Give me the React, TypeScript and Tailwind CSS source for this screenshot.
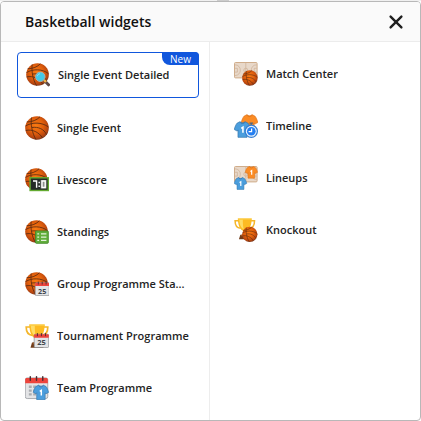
import React, { useId } from "react";

type BoxProps = { x?: number; y?: number; s?: number };

function Ball({ x = 0, y = 0, s = 1 }: BoxProps) {
  const id = useId();
  return (
    <g transform={`translate(${x} ${y}) scale(${s})`}>
      <radialGradient id={id} cx="0.45" cy="0.4" r="0.62">
        <stop offset="0" stopColor="#f97b12" />
        <stop offset="0.5" stopColor="#e2600c" />
        <stop offset="0.82" stopColor="#b9460e" />
        <stop offset="1" stopColor="#7a3a22" />
      </radialGradient>
      <circle cx="12" cy="12" r="11.8" fill={`url(#${id})`} />
      <g fill="none" stroke="#5e2c12" strokeWidth="0.9">
        <path d="M.5 10C7 6 17 6 23.4 11" />
        <path d="M6.5 1.5C5.5 8 7 17 11 23.7" />
        <path d="M1.8 6C7 6 12 4 15 .8" />
        <path d="M7 11.5C13 10.5 19 13 21.5 18.5" />
        <path d="M.8 14.5C7 13 14 16 17.5 22" />
      </g>
    </g>
  );
}

function Trophy() {
  return (
    <g>
      <path d="M5 3H1.2c0 5 2.2 8 6 8.3M19 3h3.8c0 5-2.2 8-6 8.3" fill="none" stroke="#f4b62c" strokeWidth="1.7" />
      <path d="M4.3.6h15.4C19.6 8 17.5 13 13.6 14.5V19h-3.2v-4.5C6.5 13 4.4 8 4.3.6Z" fill="#fdbb22" />
      <path d="M5.8 1.6h4c0 5 .2 8 1.2 11.5C7.5 11 6 7 5.8 1.6Z" fill="#ffdc65" />
      <path d="M4.3.6h15.4v1.2H4.3Z" fill="#fbd04a" />
      <path d="M7 18.5h10l1.5 5.2h-13Z" fill="#713c19" />
      <path d="M8 18.5h8l.6 1.8H7.5Z" fill="#a45a25" />
    </g>
  );
}

function Calendar({ x = 0, y = 0, s = 1, day }: BoxProps & { day?: string }) {
  return (
    <g transform={`translate(${x} ${y}) scale(${s})`}>
      <rect x=".3" y="2" width="23.4" height="21.5" rx="2" fill="#e3e4e6" stroke={day ? "#777b80" : "#a5a8ac"} strokeWidth="1" />
      <path d="M.2 7.5V3.7c0-1 .8-1.7 1.8-1.7h20c1 0 1.8.7 1.8 1.7v3.8Z" fill="#ed443c" />
      <g stroke="#4c2c30" strokeWidth="1.5" strokeLinecap="round">
        <path d="M5.5.8v3.6M12 .8v3.6M18.5.8v3.6" />
      </g>
      {day ? (
        <text x="12" y="20" textAnchor="middle" fill="#3f464d" className="font-['Open_Sans',sans-serif] text-[12px] font-bold">
          {day}
        </text>
      ) : (
        <path d="M4 10h3v2.4H4Zm4.5 0h3v2.4h-3Zm4.5 0h3v2.4h-3ZM4 14h3v2.4H4Zm4.5 0h3v2.4h-3ZM4 18h3v2.4H4Zm4.5 0h3v2.4h-3Z" fill="#a9acb0" />
      )}
    </g>
  );
}

function Court() {
  return (
    <g fill="none" stroke="#cfb095" strokeWidth=".7">
      <rect x=".5" y=".5" width="22.6" height="15.4" rx="1" fill="#e8d8c9" stroke="#d0ad8b" strokeWidth="1" />
      <path d="M11.8.5v15.4M.8 6.3h2.6v3.8H.8M22.8 6.3h-2.6v3.8h2.6" />
      <path d="M.8 2.8c7.4 0 7.4 10.8 0 10.8M22.8 2.8c-7.4 0-7.4 10.8 0 10.8" />
      <circle cx="11.8" cy="8.2" r="2" />
    </g>
  );
}

function Shirt({ x = 0, y = 0, s = 1, color, edge, mark = true }: BoxProps & { color: string; edge: string; mark?: boolean }) {
  return (
    <g transform={`translate(${x} ${y}) scale(${s})`}>
      <path d="M8.5 1 4.6 2.8C2.8 4.6 1.2 8.4.4 12l4.2 2.2 1-1.6V23h12.8V12.6l1 1.6 4.2-2.2c-.8-3.6-2.4-7.4-4.2-9.2L15.5 1c-1 2-6 2-7 0Z" fill={color} stroke={edge} strokeWidth="1" strokeLinejoin="round" />
      <path d="M8.5 1c.6 3.4 6.4 3.4 7 0" fill="none" stroke={edge} strokeWidth="1.2" />
      {mark && <path d="m10.2 10.4 2.4-1.6V16.5" fill="none" stroke="#fff" strokeWidth="2.2" />}
    </g>
  );
}

function Magnifier() {
  return (
    <g>
      <path d="m18.5 17.8 4 4" stroke="#5e4946" strokeWidth="3" strokeLinecap="round" />
      <path d="m18 17 2 2" stroke="#f5b33e" strokeWidth="2.4" />
      <circle cx="14.3" cy="13.8" r="4.7" fill="#42c9e8" stroke="#a4b3b5" strokeWidth="1" />
      <path d="M11.4 13.2c.2-1.5 1.2-2.3 2.5-2.4" fill="none" stroke="#91e8f7" strokeWidth=".9" />
    </g>
  );
}

function Scoreboard() {
  return (
    <g>
      <rect x="5.1" y="9.8" width="18.2" height="12.7" fill="#252b27" stroke="#63aa30" strokeWidth="1.4" />
      <path d="M15.6 12h6v8.5h-6Z" fill="#8c908d" />
      <g fill="none" stroke="#fff" strokeWidth="1.4">
        <path d="M8 13h3.6v6.8M17 13h3.2v6.5H17Z" />
        <path d="M14.2 13.8v1.5m0 2.1v1.5" />
      </g>
    </g>
  );
}

function Checklist() {
  return (
    <g>
      <rect x="10.5" y="10.9" width="12.8" height="12.4" rx=".8" fill="#61ae3b" stroke="#438a2a" strokeWidth=".9" />
      <path d="M12.3 13.8h1.8m-1.8 3.3h1.8m-1.8 3.3h1.8M16 13.8h5.4M16 17.1h5.4M16 20.4h5.4" stroke="#e4f2dc" strokeWidth="1.2" />
    </g>
  );
}

function Stopwatch() {
  return (
    <g>
      <path d="M17.3 9.5v2m-1.8-2.4h3.6" stroke="#52677c" strokeWidth="1.4" />
      <circle cx="17.3" cy="17.3" r="6.1" fill="#e6f1fc" stroke="#367ed1" strokeWidth="1.2" />
      <circle cx="17.3" cy="17.3" r="4.3" fill="#247ff2" />
      <path d="M17.6 14.4v3.2h-3" fill="none" stroke="#fff" strokeWidth="1.2" />
    </g>
  );
}

const blue = { color: "#4b9edd", edge: "#3677ad" };
const orange = { color: "#fb8c25", edge: "#df741b" };

type Widget = { label: string; icon: React.ReactNode; isNew?: boolean };

const leftWidgets: Widget[] = [
  { label: "Single Event Detailed", icon: <><Ball s={0.96} /><Magnifier /></>, isNew: true },
  { label: "Single Event", icon: <Ball /> },
  { label: "Livescore", icon: <><Ball s={0.94} /><Scoreboard /></> },
  { label: "Standings", icon: <><Ball s={0.96} /><Checklist /></> },
  { label: "Group Programme Sta...", icon: <><Ball s={0.96} /><Calendar x={10} y={9.5} s={0.6} day="25" /></> },
  { label: "Tournament Programme", icon: <><Trophy /><Calendar x={9} y={9} s={0.62} day="25" /></> },
  { label: "Team Programme", icon: <><Calendar s={0.96} /><Shirt x={8} y={8.5} s={0.66} {...blue} /></> },
];

const rightWidgets: Widget[] = [
  { label: "Match Center", icon: <><Court /><Ball x={8} y={8} s={0.66} /></> },
  { label: "Timeline", icon: <><Shirt x={7} s={0.71} {...orange} mark={false} /><Shirt y={7} s={0.71} {...blue} /><Stopwatch /></> },
  { label: "Lineups", icon: <><Court /><Shirt x={11} s={0.53} {...orange} /><Shirt y={11} s={0.54} {...blue} /></> },
  { label: "Knockout", icon: <><g transform="scale(.9)"><Trophy /></g><Ball x={8} y={8.5} s={0.65} /></> },
];

function WidgetButton({ label, icon, isNew }: Widget) {
  return (
    <button
      type="button"
      className={
        isNew
          ? "relative flex h-[46px] w-full items-center gap-2 rounded border border-[#1157dd] pl-2 text-left"
          : "flex h-11 w-full items-center gap-2 pl-2 text-left"
      }
    >
      <svg viewBox="0 0 24 24" className="size-6 shrink-0" aria-hidden="true">{icon}</svg>
      <span className="truncate">{label}</span>
      {isNew && (
        <span className="absolute -top-px -right-px h-[13px] rounded-tr rounded-bl-lg bg-[#1157dd] px-2 text-[10px] leading-[14px] font-normal text-white">
          New
        </span>
      )}
    </button>
  );
}

export default function App() {
  return (
    <div className="flex min-h-screen flex-col bg-white font-['Open_Sans',sans-serif] text-[#242424]">
      <div className="flex h-px justify-center bg-[#f0f0f0] pl-6">
        <div className="w-3 bg-[#cccccc]" />
      </div>
      <section className="flex flex-1 flex-col overflow-hidden rounded border border-[#b8b8b8]">
        <header className="flex h-10 items-center justify-between border-b border-[#ececec] bg-[#fafafa] pr-4 pl-6">
          <h1 className="text-[14px] leading-5 font-semibold text-[#111]">Basketball widgets</h1>
          <button type="button" aria-label="Close" className="flex size-4 items-center justify-center">
            <svg viewBox="0 0 16 16" className="size-4" fill="none" stroke="#202020" strokeWidth="2.4" strokeLinecap="round">
              <path d="m2.6 2.6 10.8 10.8M13.4 2.6 2.6 13.4" />
            </svg>
          </button>
        </header>
        <div className="grid flex-1 grid-cols-[209fr_210fr] text-[11px] leading-4 font-semibold">
          <div className="flex flex-col gap-2 border-r border-[#ededed] pt-[10px] pr-[10px] pl-4">
            {leftWidgets.map((w) => <WidgetButton key={w.label} {...w} />)}
          </div>
          <div className="flex flex-col gap-2 pt-[10px] pr-4 pl-4">
            {rightWidgets.map((w) => <WidgetButton key={w.label} {...w} />)}
          </div>
        </div>
      </section>
    </div>
  );
}
